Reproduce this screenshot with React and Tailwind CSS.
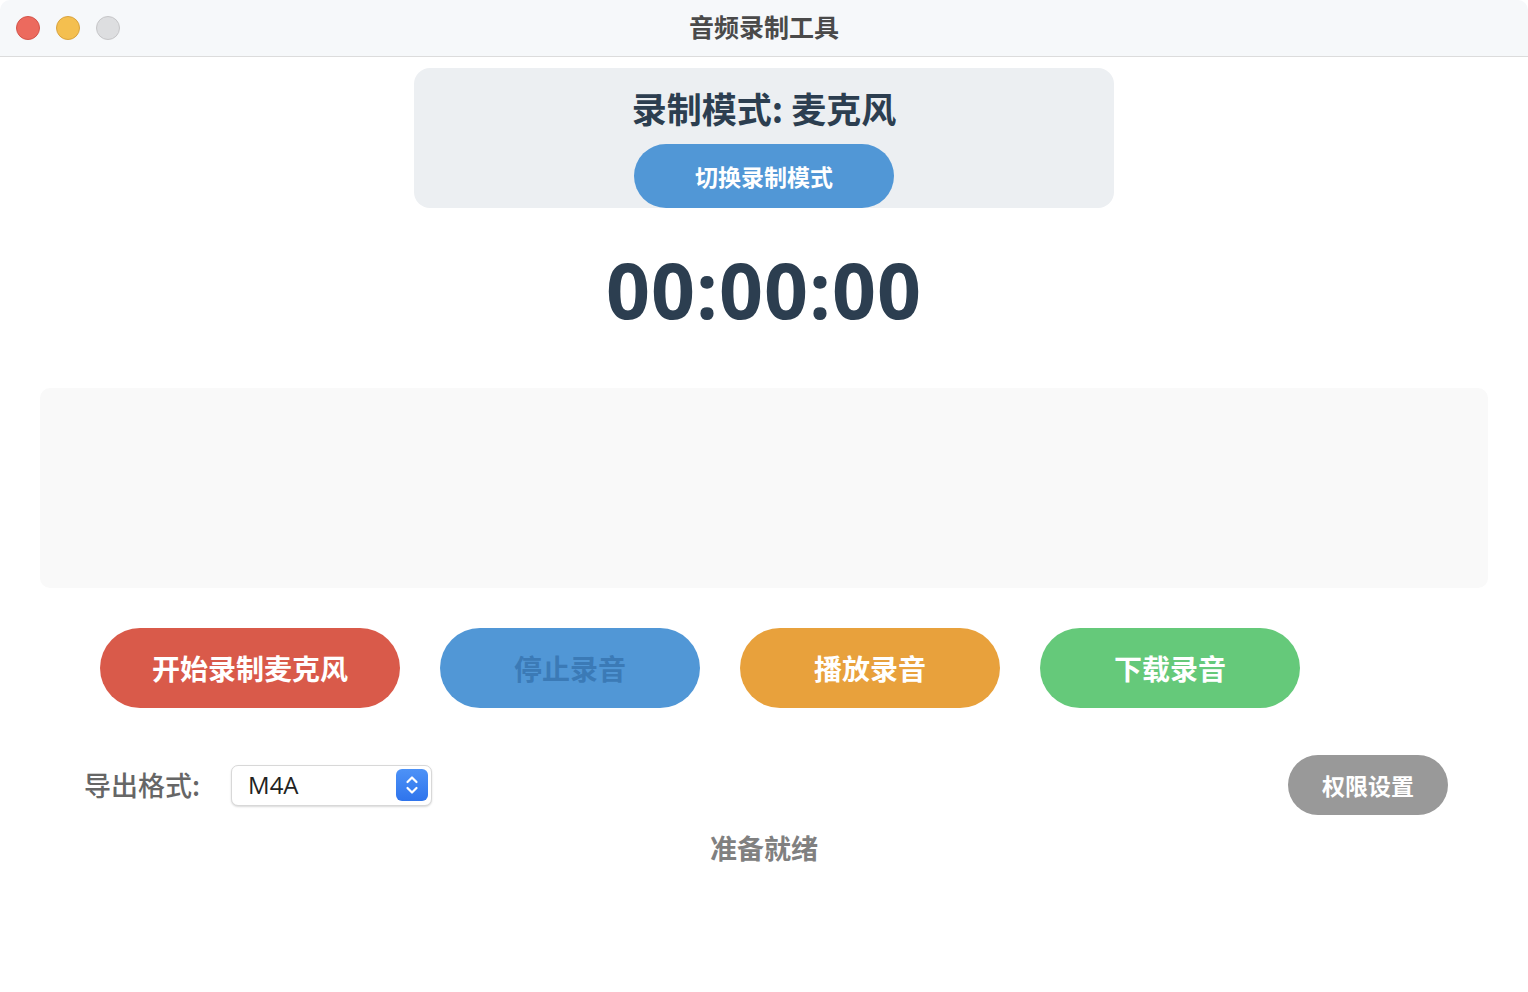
import React from "react";

const CJK = '"Noto Sans CJK SC", "Noto Sans", sans-serif';

export default function App() {
  return (
    <div className="w-[1528px] h-[992px] bg-white overflow-hidden" style={{ fontFamily: CJK }}>
      {/* Title bar */}
      <div className="relative h-[57px] bg-[#f6f8fa] border-b border-[#dcdcdc] flex items-center justify-center rounded-t-[10px]">
        <div className="absolute left-[16px] top-[16px] flex gap-[16px]">
          <div className="w-[24px] h-[24px] rounded-full bg-[#ec6a5e] border border-[#d4544a]" />
          <div className="w-[24px] h-[24px] rounded-full bg-[#f4bf4f] border border-[#d9a33e]" />
          <div className="w-[24px] h-[24px] rounded-full bg-[#dddee0] border border-[#c6c6c8]" />
        </div>
        <span className="text-[25px] font-bold text-[#4a4a4a] leading-none mb-[4px]">音频录制工具</span>
      </div>

      {/* Mode card */}
      <div className="flex justify-center mt-[11px]">
        <div className="w-[700px] h-[140px] bg-[#eceff2] rounded-[16px] overflow-hidden flex flex-col items-center">
          <div className="mt-[21px] h-[40px] flex items-center text-[35px] font-bold text-[#2c3e50] leading-none">
            录制模式: 麦克风
          </div>
          <button className="mt-[18px] w-[260px] h-[64px] shrink-0 rounded-full bg-[#5197d6] text-white text-[23px] font-bold">
            切换录制模式
          </button>
        </div>
      </div>

      {/* Timer */}
      <div className="h-[180px] flex items-center justify-center pb-[18px]">
        <span
          className="text-[77px] font-bold text-[#2c3e50] leading-none tracking-[1px]"
          style={{ fontFamily: '"Open Sans", sans-serif' }}
        >
          00:00:00
        </span>
      </div>

      {/* Waveform */}
      <div className="mx-[40px] h-[200px] bg-[#f9f9f9] rounded-[10px]" />

      {/* Buttons */}
      <div className="mt-[40px] pl-[100px] flex gap-[40px]">
        <button className="w-[300px] h-[80px] rounded-full bg-[#d95a4a] text-white text-[28px] font-bold">
          开始录制麦克风
        </button>
        <button className="w-[260px] h-[80px] rounded-full bg-[#5197d6] text-[#3b7ab6] text-[28px] font-bold">
          停止录音
        </button>
        <button className="w-[260px] h-[80px] rounded-full bg-[#e8a13c] text-white text-[28px] font-bold">
          播放录音
        </button>
        <button className="w-[260px] h-[80px] rounded-full bg-[#65c97a] text-white text-[28px] font-bold">
          下载录音
        </button>
      </div>

      {/* Export row */}
      <div className="mt-[47px] pl-[84px] pr-[80px] flex items-center">
        <span className="text-[27px] text-[#666666] font-medium">导出格式:</span>
        <div className="ml-[31px] w-[201px] h-[41px] bg-white border border-[#d8d8d8] rounded-[7px] shadow-[0_1px_2px_rgba(0,0,0,0.15)] flex items-center justify-between pl-[16px] pr-[3px]">
          <span className="text-[24px] text-[#222222]" style={{ fontFamily: '"Open Sans", "Noto Sans", sans-serif' }}>
            M4A
          </span>
          <div className="w-[32px] h-[32px] rounded-[6px] bg-gradient-to-b from-[#4d92f7] to-[#2f74ec] flex items-center justify-center">
            <svg width="16" height="24" viewBox="0 0 16 24" fill="none" stroke="white" strokeWidth="2.2" strokeLinecap="round" strokeLinejoin="round">
              <path d="M3.5 9 L8 4.5 L12.5 9" />
              <path d="M3.5 15 L8 19.5 L12.5 15" />
            </svg>
          </div>
        </div>
        <div className="flex-1" />
        <button className="w-[160px] h-[60px] rounded-full bg-[#999999] text-white text-[23px] font-bold">
          权限设置
        </button>
      </div>

      {/* Status */}
      <div className="mt-[13px] flex justify-center">
        <span className="text-[27px] font-bold text-[#808080]">准备就绪</span>
      </div>
    </div>
  );
}
